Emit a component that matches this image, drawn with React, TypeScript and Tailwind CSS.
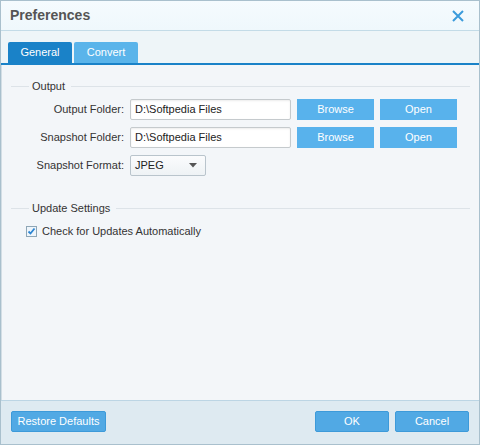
import React from "react";

const font = { fontFamily: '"Liberation Sans", Arial, sans-serif' };

function GroupHeader({ title }: { title: string }) {
  return (
    <div className="flex items-center h-[14px] pl-[9px] pr-[9px]">
      <div className="w-[18px] h-px bg-[#dde3e8]" />
      <span className="ml-[3px] text-[11px] leading-[14px] text-[#333]">{title}</span>
      <div className="ml-[6px] flex-1 h-px bg-[#dde3e8]" />
    </div>
  );
}

function Btn({ label, w }: { label: string; w: string }) {
  return (
    <div
      className={`${w} h-[21px] bg-[#58b2ec] text-white text-[11px] flex items-center justify-center`}
    >
      {label}
    </div>
  );
}

function FooterBtn({ label, w }: { label: string; w: string }) {
  return (
    <div
      className={`${w} h-[21px] bg-[#51a9e4] border border-[#3d9ad9] rounded-[2px] text-white text-[11px] flex items-center justify-center`}
    >
      {label}
    </div>
  );
}

function FolderRow({ label }: { label: string }) {
  return (
    <div className="flex items-center h-[21px]">
      <div className="w-[122px] text-right text-[11px] text-[#333]">{label}</div>
      <div className="ml-[6px] w-[161px] h-[21px] bg-white border border-[#c5cacd] rounded-[2px] shadow-[inset_0_1px_2px_rgba(0,0,0,0.08)] flex items-center pl-[4px] text-[11px] text-[#222]">
        D:\Softpedia Files
      </div>
      <div className="ml-[6px]">
        <Btn label="Browse" w="w-[77px]" />
      </div>
      <div className="ml-[6px]">
        <Btn label="Open" w="w-[77px]" />
      </div>
    </div>
  );
}

export default function App() {
  return (
    <div
      className="w-[480px] h-[445px] flex flex-col border border-[#a9c0cd] bg-[#f3f6f9] overflow-hidden"
      style={font}
    >
      {/* Title bar */}
      <div className="h-[30px] shrink-0 flex items-center justify-between pl-[9px] pr-[15px] bg-gradient-to-b from-[#f5fbfe] to-[#eff8fc] border-b border-[#c3dbe7]">
        <span className="text-[14px] font-bold text-[#555]">Preferences</span>
        <svg width="12" height="12" viewBox="0 0 12 12">
          <path d="M1 1 L11 11 M11 1 L1 11" stroke="#3b9bdb" strokeWidth="2" />
        </svg>
      </div>
      {/* Tab strip */}
      <div className="h-[32px] shrink-0 bg-[#eef5f8] flex items-end pl-[7px] gap-[2px]">
        <div className="w-[64px] h-[21px] bg-[#1a82c8] rounded-t-[2px] text-white text-[11px] flex items-center justify-center">
          General
        </div>
        <div className="w-[64px] h-[21px] bg-[#5ab4ea] rounded-t-[2px] text-white text-[11px] flex items-center justify-center">
          Convert
        </div>
      </div>
      <div className="h-[2px] shrink-0 bg-[#1a82c8]" />
      {/* Content */}
      <div className="flex-1 flex flex-col pt-[14px] bg-[#f3f6f9] border-l border-[#d3dee5]">
        <GroupHeader title="Output" />
        <div className="mt-[6px] flex flex-col gap-[7px]">
          <FolderRow label="Output Folder:" />
          <FolderRow label="Snapshot Folder:" />
          <div className="flex items-center h-[21px]">
            <div className="w-[122px] text-right text-[11px] text-[#333]">Snapshot Format:</div>
            <div className="ml-[6px] w-[76px] h-[21px] bg-gradient-to-b from-[#fbfcfd] to-[#eef2f5] border border-[#b9c4cc] rounded-[2px] flex items-center justify-between pl-[4px] pr-[8px] text-[11px] text-[#222]">
              <span>JPEG</span>
              <svg width="8" height="5" viewBox="0 0 8 5">
                <path d="M0 0 L8 0 L4 4.5 Z" fill="#555" />
              </svg>
            </div>
          </div>
        </div>
        <div className="mt-[25px]">
          <GroupHeader title="Update Settings" />
        </div>
        <div className="mt-[9px] flex items-center h-[14px] pl-[24px]">
          <div className="w-[11px] h-[11px] border border-[#8ea6b6] bg-[#eef5fb] flex items-center justify-center">
            <svg width="9" height="9" viewBox="0 0 9 9">
              <path d="M1.5 4.5 L3.5 6.5 L7.5 1.5" stroke="#2d85d2" strokeWidth="1.8" fill="none" />
            </svg>
          </div>
          <span className="ml-[5px] text-[11px] text-[#333]">Check for Updates Automatically</span>
        </div>
      </div>
      {/* Footer */}
      <div className="h-[44px] shrink-0 bg-[#deeaf1] border-t border-[#bcd5e4] flex items-start pt-[10px] pl-[10px] pr-[10px]">
        <FooterBtn label="Restore Defaults" w="w-[95px]" />
        <div className="flex-1" />
        <FooterBtn label="OK" w="w-[74px]" />
        <div className="ml-[6px]">
          <FooterBtn label="Cancel" w="w-[74px]" />
        </div>
      </div>
    </div>
  );
}
